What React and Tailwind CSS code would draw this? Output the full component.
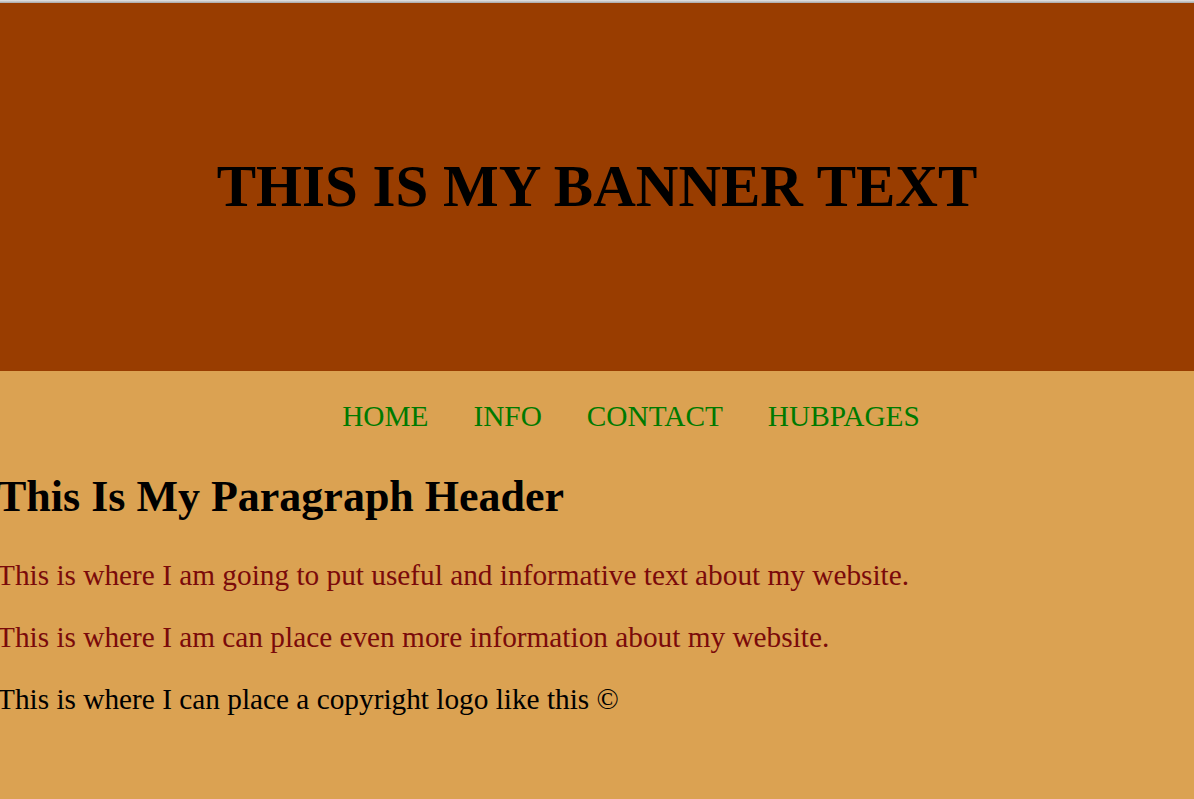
import React from 'react';

export default function App() {
  return (
    <div className="min-h-[799px] bg-[#dba252] font-['Liberation_Serif',serif] overflow-hidden">
      <div className="h-[3px] bg-gradient-to-b from-[#e6e6e6] to-[#a8a8a8]" />

      {/* Banner */}
      <header className="h-[368px] bg-[#993d00] flex items-center justify-center">
        <h1 className="text-[59px] font-bold text-black leading-none -mt-[1px]">
          THIS IS MY BANNER TEXT
        </h1>
      </header>

      {/* Nav */}
      <nav className="mt-[29px] flex justify-center pl-[68px] gap-[45px] text-[29.3px] leading-[33px] text-[#007a00]">
        <a href="#">HOME</a>
        <a href="#">INFO</a>
        <a href="#">CONTACT</a>
        <a href="#">HUBPAGES</a>
      </nav>

      <main className="-ml-[3px]">
        <h2 className="mt-[39px] text-[44px] font-bold text-black leading-[50px]">
          This Is My Paragraph Header
        </h2>
        <p className="mt-[37px] text-[29.3px] leading-[33px] text-[#7a0a0a]">
          This is where I am going to put useful and informative text about my website.
        </p>
        <p className="mt-[29px] text-[29.3px] leading-[33px] text-[#7a0a0a]">
          This is where I am can place even more information about my website.
        </p>
        <p className="mt-[29px] text-[29.3px] leading-[33px] text-black">
          This is where I can place a copyright logo like this ©
        </p>
      </main>
    </div>
  );
}
